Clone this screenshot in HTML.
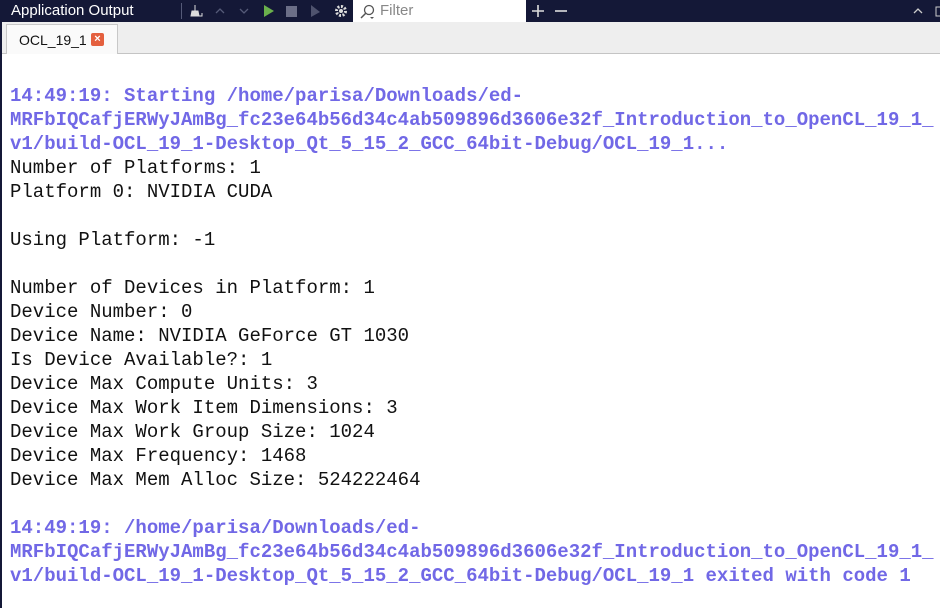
<!DOCTYPE html>
<html><head><meta charset="utf-8"><style>
html,body{margin:0;padding:0;width:940px;height:608px;overflow:hidden;background:#fff;font-family:"Liberation Sans",sans-serif}
.tb{position:absolute;left:0;top:0;width:940px;height:22px;background:#141837;color:#fff}
.title{position:absolute;left:11px;top:2px;font-size:15px;color:#fff}
.sep{position:absolute;left:181px;top:3px;width:1px;height:16px;background:#555a78}
.filter{position:absolute;left:353px;top:0;width:173px;height:22px;background:#fff}
.filter span{position:absolute;left:27px;top:2px;font-size:15px;color:#888}
.tabbar{position:absolute;left:0;top:22px;width:940px;height:31px;background:#eeeeee;border-bottom:1px solid #c4c4c4}
.tab{position:absolute;left:6px;top:2px;width:112px;height:30px;background:#fafafa;border:1px solid #c8c8c8;border-bottom:none;box-sizing:border-box}
.tab span{position:absolute;left:12px;top:7px;font-size:14px;color:#111}
.x{position:absolute;left:84px;top:8px;width:13px;height:13px;background:#e4603f;border-radius:2px;color:#fff;font-size:11px;line-height:13px;text-align:center;font-weight:bold}
.lb{position:absolute;left:0;top:22px;width:2px;height:586px;background:#141837}
pre{position:absolute;left:10px;top:84px;margin:0;font-family:"Liberation Mono",monospace;font-size:19px;line-height:24px;color:#111}
.p{color:#7168e6;font-weight:bold}
</style></head><body>
<div class="tb">
<div class="title">Application Output</div>
<div class="sep"></div>
<svg style="position:absolute;left:188px;top:3px" width="160" height="16">
<path d="M7 2v6M4 8h6l1 5H3z" fill="#ddd" stroke="#ddd" stroke-width="1"/><path d="M11 13h3v-3" stroke="#ddd" fill="none"/>
<path d="M28 10l4-4 4 4" stroke="#555a78" fill="none" stroke-width="1.3"/>
<path d="M52 6l4 4 4-4" stroke="#555a78" fill="none" stroke-width="1.3"/>
<path d="M76 2l10 6-10 6z" fill="#6ab04c"/>
<rect x="98" y="3" width="11" height="11" fill="#6b6e87"/>
<path d="M123 2l9 7-9 5z" fill="#4f536e"/>
<circle cx="153" cy="8" r="4.5" fill="none" stroke="#ddd" stroke-width="3" stroke-dasharray="2 1.5"/><circle cx="153" cy="8" r="2" fill="#ddd"/>
</svg>
<div class="filter"><svg style="position:absolute;left:6px;top:4px" width="18" height="16"><circle cx="10" cy="6" r="4.5" fill="none" stroke="#555" stroke-width="1.3"/><path d="M7 9l-5 5" stroke="#555" stroke-width="1.5"/><path d="M11 13l2 2 2-2" fill="#555"/></svg><span>Filter</span></div>
<svg style="position:absolute;left:530px;top:3px" width="40" height="16"><path d="M8 2v12M2 8h12" stroke="#ddd" stroke-width="1.6"/><path d="M25 8h12" stroke="#ddd" stroke-width="1.6"/></svg>
<svg style="position:absolute;left:910px;top:3px" width="30" height="16"><path d="M4 10l4-4 4 4" stroke="#ccc" fill="none" stroke-width="1.3"/><rect x="26" y="4" width="6" height="9" fill="none" stroke="#ccc"/></svg>
</div>
<div class="tabbar"><div class="tab"><span>OCL_19_1</span><div class="x">×</div></div></div>
<div class="lb"></div>
<pre><span class="p">14:49:19: Starting /home/parisa/Downloads/ed-
MRFbIQCafjERWyJAmBg_fc23e64b56d34c4ab509896d3606e32f_Introduction_to_OpenCL_19_1_
v1/build-OCL_19_1-Desktop_Qt_5_15_2_GCC_64bit-Debug/OCL_19_1...</span>
Number of Platforms: 1
Platform 0: NVIDIA CUDA

Using Platform: -1

Number of Devices in Platform: 1
Device Number: 0
Device Name: NVIDIA GeForce GT 1030
Is Device Available?: 1
Device Max Compute Units: 3
Device Max Work Item Dimensions: 3
Device Max Work Group Size: 1024
Device Max Frequency: 1468
Device Max Mem Alloc Size: 524222464

<span class="p">14:49:19: /home/parisa/Downloads/ed-
MRFbIQCafjERWyJAmBg_fc23e64b56d34c4ab509896d3606e32f_Introduction_to_OpenCL_19_1_
v1/build-OCL_19_1-Desktop_Qt_5_15_2_GCC_64bit-Debug/OCL_19_1 exited with code 1</span></pre>
</body></html>
